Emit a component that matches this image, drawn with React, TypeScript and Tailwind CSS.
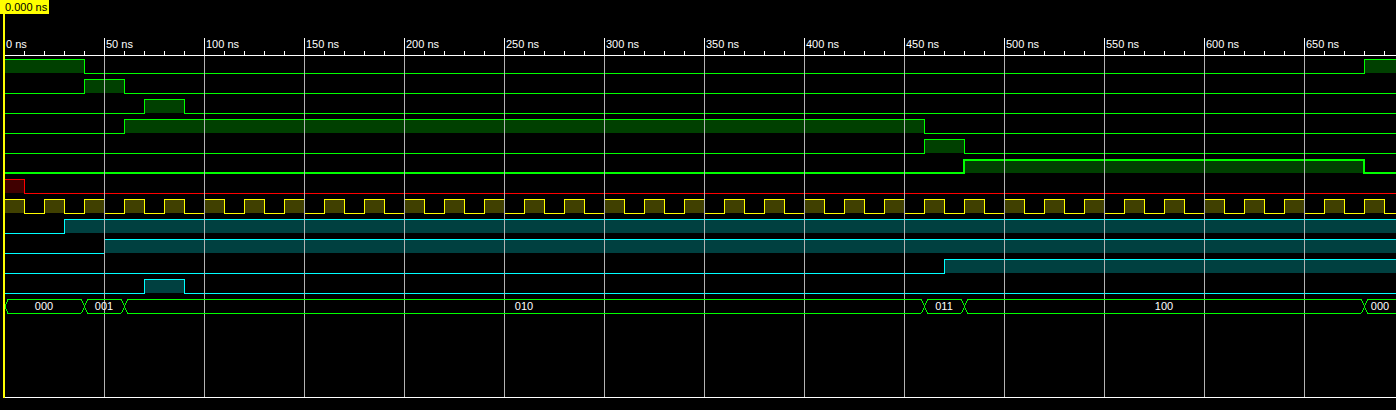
import React from "react";

const FONT = '"Liberation Sans", Arial, sans-serif';
const W = 1396;
const END_T = 710;

const X = (t: number) => 4 + 2 * t;

type Sig = {
  stroke: string;
  fill: string;
  highs: [number, number][];
  bold?: boolean;
};

const GREEN = "#00ff00";
const GREEN_FILL = "#004000";
const CYAN = "#00ffff";
const CYAN_FILL = "#004040";

const clock: [number, number][] = Array.from({ length: 36 }, (_, k) => [20 * k, 20 * k + 10]);

const signals: Sig[] = [
  { stroke: GREEN, fill: GREEN_FILL, highs: [[0, 40], [680, END_T]] },
  { stroke: GREEN, fill: GREEN_FILL, highs: [[40, 60]] },
  { stroke: GREEN, fill: GREEN_FILL, highs: [[70, 90]] },
  { stroke: GREEN, fill: GREEN_FILL, highs: [[60, 460]] },
  { stroke: GREEN, fill: GREEN_FILL, highs: [[460, 480]] },
  { stroke: GREEN, fill: GREEN_FILL, highs: [[480, 680]], bold: true },
  { stroke: "#ff0000", fill: "#400000", highs: [[0, 10]] },
  { stroke: "#ffff00", fill: "#404000", highs: clock },
  { stroke: CYAN, fill: CYAN_FILL, highs: [[30, END_T]] },
  { stroke: CYAN, fill: CYAN_FILL, highs: [[50, END_T]] },
  { stroke: CYAN, fill: CYAN_FILL, highs: [[470, END_T]] },
  { stroke: CYAN, fill: CYAN_FILL, highs: [[70, 90]] },
];

const bus: { from: number; to: number; label: string }[] = [
  { from: 0, to: 40, label: "000" },
  { from: 40, to: 60, label: "001" },
  { from: 60, to: 460, label: "010" },
  { from: 460, to: 480, label: "011" },
  { from: 480, to: 680, label: "100" },
  { from: 680, to: END_T, label: "000" },
];

function Wave({ sig, row }: { sig: Sig; row: number }) {
  const top = 59 + 20 * row;
  const low = top + 14;
  const yt = sig.bold ? top + 1 : top + 0.5;
  const yl = sig.bold ? low : low + 0.5;
  const ex = (t: number) => Math.min(X(t), W + 4) + (sig.bold ? 0 : 0.5);
  const startHigh = sig.highs[0][0] === 0;
  let d = `M5 ${startHigh ? yt : yl}`;
  for (const [a, b] of sig.highs) {
    if (a !== 0) d += ` L${ex(a)} ${yl} L${ex(a)} ${yt}`;
    d += ` L${ex(b)} ${yt} L${ex(b)} ${yl}`;
  }
  d += ` L${W + 4} ${yl}`;
  return (
    <g>
      {sig.highs.map(([a, b], i) => (
        <rect
          key={i}
          x={Math.max(X(a), 5)}
          y={top}
          width={Math.min(X(b), W + 4) - Math.max(X(a), 5)}
          height={14}
          fill={sig.fill}
        />
      ))}
      <path d={d} fill="none" stroke={sig.stroke} strokeWidth={sig.bold ? 2 : 1} />
    </g>
  );
}

function Bus() {
  const top = 299.5;
  const bot = 313.5;
  const mid = 306.5;
  const parts: string[] = [];
  parts.push(`M5 ${mid} L8 ${top}`, `M5 ${mid} L8 ${bot}`);
  bus.forEach((s, i) => {
    const a = i === 0 ? 8 : X(s.from) + 3;
    const b = Math.min(X(s.to) - 3, W + 4);
    parts.push(`M${a} ${top} L${b} ${top}`, `M${a} ${bot} L${b} ${bot}`);
    if (X(s.to) < W) {
      const c = X(s.to) + 0.5;
      parts.push(`M${c - 3} ${top} L${c + 3} ${bot}`, `M${c - 3} ${bot} L${c + 3} ${top}`);
    }
  });
  return (
    <g>
      <path d={parts.join(" ")} fill="none" stroke={GREEN} strokeWidth={1} />
      {bus.map((s, i) => {
        const l = Math.max(X(s.from), 4);
        const r = Math.min(X(s.to), W);
        return (
          <text
            key={i}
            x={(l + r) / 2}
            y={310}
            fill="#ffffff"
            fontSize={11}
            fontFamily={FONT}
            textAnchor="middle"
            shapeRendering="auto"
          >
            {s.label}
          </text>
        );
      })}
    </g>
  );
}

export default function App() {
  const majors = Array.from({ length: 14 }, (_, k) => k * 50);
  const minors = Array.from({ length: 70 }, (_, k) => k * 10).filter((t) => t % 50 !== 0);
  return (
    <div className="w-[1396px] h-[410px] bg-black flex flex-col overflow-hidden" style={{ fontFamily: FONT }}>
      <div className="h-[14px] w-[49px] bg-[#ffff00] text-black text-[11px] leading-[14px] pl-[5px] whitespace-nowrap">
        0.000 ns
      </div>
      <svg
        width={W}
        height={396}
        viewBox={`0 14 ${W} 396`}
        shapeRendering="crispEdges"
        className="block"
      >
        {/* ruler */}
        <line x1={4} y1={55.5} x2={W} y2={55.5} stroke="#ffffff" />
        {minors.map((t) => (
          <line key={t} x1={X(t) + 0.5} y1={51} x2={X(t) + 0.5} y2={55} stroke="#ffffff" />
        ))}
        {majors.map((t) => (
          <g key={t}>
            <line x1={X(t) + 0.5} y1={38} x2={X(t) + 0.5} y2={55} stroke="#ffffff" />
            <text x={X(t) + 2} y={48} fill="#ffffff" fontSize={11} fontFamily={FONT} shapeRendering="auto">
              {t} ns
            </text>
          </g>
        ))}

        {signals.map((s, i) => (
          <Wave key={i} sig={s} row={i} />
        ))}

        {/* grid */}
        {majors.slice(1).map((t) => (
          <line key={t} x1={X(t) + 0.5} y1={56} x2={X(t) + 0.5} y2={397} stroke="#b4b4b4" />
        ))}

        <Bus />

        <line x1={4} y1={397.5} x2={W} y2={397.5} stroke="#ffffff" />

        {/* cursor */}
        <rect x={3} y={14} width={2} height={384} fill="#ffff00" />
      </svg>
    </div>
  );
}
